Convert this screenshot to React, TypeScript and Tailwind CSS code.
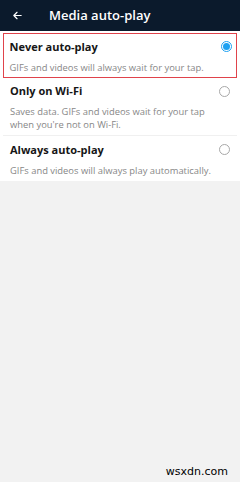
const options = [
  {
    id: 'never',
    title: 'Never auto-play',
    desc: ['GIFs and videos will always wait for your tap.'],
  },
  {
    id: 'wifi',
    title: 'Only on Wi-Fi',
    desc: ['Saves data. GIFs and videos wait for your tap', "when you're not on Wi-Fi."],
  },
  {
    id: 'always',
    title: 'Always auto-play',
    desc: ['GIFs and videos will always play automatically.'],
  },
];

function Radio({ checked }: { checked: boolean }) {
  if (checked) {
    return (
      <div className="w-[11px] h-[11px] rounded-full border-[1.5px] border-[#1da1f2] flex items-center justify-center">
        <div className="w-[7px] h-[7px] rounded-full bg-[#1da1f2]" />
      </div>
    );
  }
  return <div className="w-[11px] h-[11px] rounded-full border border-[#a8a8a8]" />;
}

export default function App() {
  const selected = 'never';
  return (
    <div
      className="w-[240px] h-[482px] bg-[#f2f2f2] flex flex-col relative"
      style={{ fontFamily: "'Open Sans', 'Liberation Sans', sans-serif" }}
    >
      {/* Header */}
      <header className="h-[31px] bg-[#0b1a2c] flex items-center px-[12px] shrink-0">
        <svg width="11" height="11" viewBox="0 0 24 24" fill="none" stroke="white" strokeWidth="2.6" strokeLinecap="round" strokeLinejoin="round">
          <path d="M20 12H4M11 5l-7 7 7 7" />
        </svg>
        <h1 className="ml-[26px] text-white text-[13px] font-semibold">Media auto-play</h1>
      </header>

      {/* Options */}
      <div className="bg-white pt-[2px]">
        {options.map((opt, i) => (
          <div
            key={opt.id}
            className={
              opt.id === selected
                ? 'mx-[3px] border-[1.5px] border-[#e0434b] pl-[5.5px] pr-[4.5px] pt-[4.5px] pb-[3px] flex'
                : 'mx-[3px] px-[7px] pt-[5.5px] pb-[4px] flex' + (i > 1 ? ' border-t border-[#f0f0f0]' : '')
            }
          >
            <div className="flex-1 min-w-0">
              <div className="text-[11px] font-bold text-[#161616] leading-[16px]">{opt.title}</div>
              <div className="mt-[6px] text-[9.4px] text-[#878787] leading-[13px]">
                {opt.desc.map((line) => (
                  <div key={line} className="whitespace-nowrap">{line}</div>
                ))}
              </div>
            </div>
            <div className="pt-[2.5px]">
              <Radio checked={opt.id === selected} />
            </div>
          </div>
        ))}
      </div>

      <div className="absolute right-[12px] bottom-[2px] text-[11px] text-black" style={{ fontFamily: "'DejaVu Sans', sans-serif" }}>
        wsxdn.com
      </div>
    </div>
  );
}
